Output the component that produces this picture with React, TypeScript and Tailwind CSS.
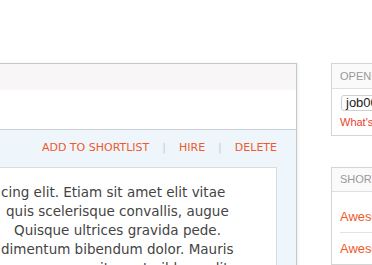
const bodyLines = [
  { text: "cing elit. Etiam sit amet elit vitae", indent: "pl-px" },
  { text: "quis scelerisque convallis, augue", indent: "pl-[6px]" },
  { text: "Quisque ultrices gravida pede.", indent: "pl-[14px]" },
  { text: "dimentum bibendum dolor. Mauris", indent: "pl-px" },
  { text: "accumsan sit amet nibh eu elit", indent: "pl-[20px]" },
];

const actions = ["ADD TO SHORTLIST", "HIRE", "DELETE"];

export default function App() {
  return (
    <div className="w-[372px] h-[265px] overflow-hidden bg-white font-['DejaVu_Sans',Verdana,sans-serif]">
      <div className="flex items-start pt-[63px]">
        {/* Candidate panel */}
        <div className="w-[297px] shrink-0 border-t border-r border-[#c3c9d1] shadow-[1px_0_2px_rgba(0,0,0,0.08)]">
          <div className="h-[26px] bg-[#f8f6f6]" />
          <div className="h-[40px] bg-white border-b border-[#c8ced6]" />
          <div className="bg-[#eef5fb] pr-[19px] h-[200px]">
            <div className="h-[37px] flex items-center justify-end text-[11px] text-[#ef5a2d]">
              {actions.map((a, i) => (
                <div key={a} className="flex items-center">
                  {i > 0 && <span className="mx-[13px] text-[#c5ccd4]">|</span>}
                  <span>{a}</span>
                </div>
              ))}
            </div>
            <div className="bg-white border border-l-0 border-[#d3dde6] pt-[15px] pb-4 text-[13.5px] leading-[19px] text-[#444]">
              {bodyLines.map((l) => (
                <div key={l.text} className={`whitespace-nowrap ${l.indent}`}>
                  {l.text}
                </div>
              ))}
            </div>
          </div>
        </div>

        {/* Sidebar */}
        <div className="ml-[34px] w-[200px] shrink-0 font-['Liberation_Sans',Arial,sans-serif]">
          <div className="border border-[#d5d5d5] bg-white">
            <div className="h-[25px] bg-[#fafafa] border-b border-[#e0e0e0] px-[8px] flex items-center text-[11px] text-[#999]">
              OPENINGS
            </div>
            <div className="px-[9px] pt-[6px] pb-[5px]">
              <div className="h-[16px] border border-[#cfcfcf] rounded-[3px] px-[4px] flex items-center text-[13px] text-[#222]">
                job0001
              </div>
              <div className="mt-[3px] -ml-px text-[11px] leading-[16px] text-[#e8432e]">What's this?</div>
            </div>
          </div>

          <div className="mt-[31px] border border-[#d5d5d5] bg-white">
            <div className="h-[24px] bg-[#fafafa] border-b border-[#e0e0e0] px-[8px] flex items-center text-[11px] text-[#999]">
              SHORTLIST
            </div>
            <div className="px-[8px] pt-[10px]">
              <div className="h-[31px] border-b border-[#e3e3e3] flex items-center text-[13px] text-[#ef5a2d]">
                Awesome Candidate
              </div>
              <div className="h-[31px] flex items-center text-[13px] text-[#ef5a2d]">
                Awesome Candidate
              </div>
            </div>
          </div>
        </div>
      </div>
    </div>
  );
}
